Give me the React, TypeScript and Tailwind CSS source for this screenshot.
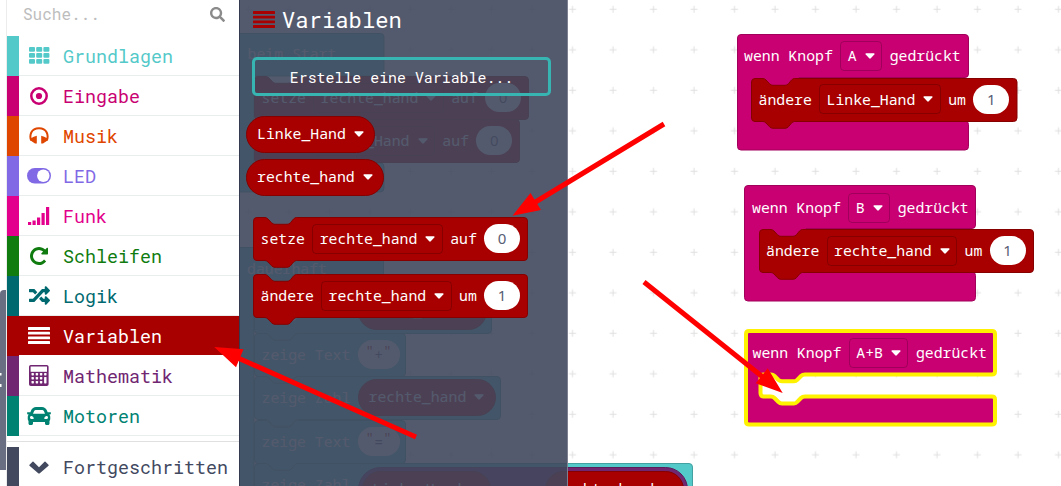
import React from "react";
import { FaCar, FaRandom, FaSearch } from "react-icons/fa";

const mono = "font-['Roboto_Mono','DejaVu_Sans_Mono',monospace]";
const blockFont = "font-['Noto_Sans_Mono','Droid_Sans_Mono','DejaVu_Sans_Mono',monospace] text-[14.8px] leading-none";

/* ---------- toolbox icons ---------- */

const GridIcon = () => (
  <svg width="21" height="17" viewBox="0 0 21 17" fill="currentColor">
    {[0, 6, 12].map((y) => [0, 7.2, 14.4].map((x) => <rect key={`${x}-${y}`} x={x} y={y} width="6" height="4.7" rx="1" />))}
  </svg>
);
const TargetIcon = () => (
  <svg width="18" height="18" viewBox="0 0 18 18" fill="currentColor">
    <circle cx="9" cy="9" r="7.7" fill="none" stroke="currentColor" strokeWidth="2.5" />
    <circle cx="9" cy="9" r="3.1" />
  </svg>
);
const HeadphonesIcon = () => (
  <svg width="20" height="17" viewBox="0 0 20 17" fill="currentColor">
    <path d="M2.2 13.5C.2 8.500 1.800 1.200 10 1.200S19.800 8.500 17.800 13.500" fill="none" stroke="currentColor" strokeWidth="2" />
    <path d="M4.800 9.700 7.800 8.700V16.600H6L1.500 13.500V11.500ZM15.200 9.700 12.200 8.700V16.600H14L18.500 13.500V11.500Z" />
  </svg>
);
const ToggleIcon = () => (
  <svg width="24" height="16" viewBox="0 0 24 16">
    <rect x="0" y="0" width="24" height="15.500" rx="7.750" fill="currentColor" />
    <circle cx="16.300" cy="7.750" r="6.200" fill="white" />
  </svg>
);
const SignalIcon = () => (
  <svg width="22" height="18" viewBox="0 0 22 18" fill="currentColor">
    <rect x="0" y="15" width="3.200" height="3" />
    <rect x="4.500" y="13.500" width="3.200" height="4.500" />
    <rect x="9" y="10.500" width="3.200" height="7.500" />
    <rect x="13.500" y="6" width="3.200" height="12" />
    <rect x="18" y="0" width="3.200" height="18" />
  </svg>
);
const RepeatIcon = () => (
  <svg width="18" height="18" viewBox="0 128 1536 1536" fill="currentColor">
    <path d="M1536 256v448q0 26-19 45t-45 19h-448q-42 0-59-40-17-39 14-69l138-138q-148-137-349-137-104 0-198.500 40.500t-163.500 109.500-109.500 163.500-40.500 198.500 40.500 198.500 109.500 163.500 163.500 109.500 198.500 40.500q119 0 225-52t179-147q7-10 23-12 15 0 25 9l137 138q9 8 9.500 20.500t-7.500 22.500q-109 132-264 204.500t-327 72.500q-156 0-298-61t-245-164-164-245-61-298 61-298 164-245 245-164 298-61q147 0 284.500 55.500t244.500 156.500l130-129q29-31 70-14 39 17 39 59z" />
  </svg>
);
const BarsIcon = ({ className = "" }: { className?: string }) => (
  <svg className={className} width="22" height="17" viewBox="0 0 22 17" fill="currentColor">
    {[0, 4.700, 9.400, 14.100].map((y) => <rect key={y} y={y} width="22" height="2.900" rx=".5" />)}
  </svg>
);
const CalcIcon = () => (
  <svg width="20" height="21" viewBox="0 0 20 21">
    <rect x=".8" y=".8" width="18" height="19.400" rx="1" fill="none" stroke="currentColor" strokeWidth="1.600" />
    <path d="M1 6.800H19V20H1Z" fill="currentColor" />
    <g fill="white">
      {[8, 12, 16].map((y) => [2.500, 6.700, 10.900].map((x) => <rect key={`${x}-${y}`} x={x} y={y} width="2.400" height="2.400" rx=".6" />))}
      <rect x="15.100" y="8" width="2.400" height="2.400" rx=".6" />
      <rect x="15.100" y="12" width="2.400" height="6.400" rx=".6" />
    </g>
  </svg>
);
const ChevronIcon = () => (
  <svg width="20" height="13" viewBox="0 0 20 13" fill="currentColor">
    <path d="M.5 3.700 3.500.7Q4 .2 4.500.7L10 6.200 15.500.7Q16 .2 16.500.7L19.500 3.700Q20 4.200 19.500 4.700L10.500 12.400Q10 12.800 9.500 12.400L.5 4.700Q0 4.200.5 3.700Z" />
  </svg>
);

const categories = [
  { name: "Grundlagen", text: "text-[#54c9c9]", bar: "bg-[#54c9c9]", icon: <GridIcon /> },
  { name: "Eingabe", text: "text-[#c90072]", bar: "bg-[#c90072]", icon: <TargetIcon /> },
  { name: "Musik", text: "text-[#df4600]", bar: "bg-[#df4600]", icon: <HeadphonesIcon /> },
  { name: "LED", text: "text-[#8169e6]", bar: "bg-[#8169e6]", icon: <ToggleIcon /> },
  { name: "Funk", text: "text-[#e3008c]", bar: "bg-[#e3008c]", icon: <SignalIcon /> },
  { name: "Schleifen", text: "text-[#107c10]", bar: "bg-[#107c10]", icon: <RepeatIcon /> },
  { name: "Logik", text: "text-[#006970]", bar: "bg-[#006970]", icon: <FaRandom size={21} /> },
  { name: "Variablen", text: "text-white bg-[#a80000]", bar: "bg-[#a80000]", icon: <BarsIcon />, active: true },
  { name: "Mathematik", text: "text-[#712672]", bar: "bg-[#712672]", icon: <CalcIcon /> },
  { name: "Motoren", text: "text-[#008272]", bar: "bg-[#008272]", icon: <FaCar size={24} /> },
];

const Toolbox = () => (
  <aside className={`relative flex h-[486px] w-[233px] shrink-0 flex-col border-l border-[#ececec] bg-white ${mono} text-[18.350px]`}>
    <div className="flex h-9 shrink-0 items-start justify-between pl-4 pr-[14px] pt-[4px]">
      <span className="text-[16px] leading-[19px] text-[#bdbdbd]">Suche...</span>
      <FaSearch size={15} className="mt-[3px] text-[#8b8b8b]" />
    </div>
    {categories.map((c) => (
      <div key={c.name} className={`flex h-10 shrink-0 ${c.text}`}>
        <div className={`w-3 ${c.bar}`} />
        <div className={`flex grow items-center border-b ${c.active ? "border-white" : "border-[#e9eded]"}`}>
          <span className="flex w-[40px] justify-center">{c.icon}</span>
          <span className="pl-[4px] pt-[2px] leading-none">{c.name}</span>
        </div>
      </div>
    ))}
    <div className="mt-[5px] h-[6px] shrink-0 border-t border-[#e0e0e0]" />
    <div className="flex h-10 shrink-0 text-[#42495f]">
      <div className="w-3 bg-[#42495f]" />
      <div className="flex grow items-center">
        <span className="flex w-[40px] justify-center"><ChevronIcon /></span>
        <span className="pl-[4px] leading-none">Fortgeschritten</span>
      </div>
    </div>
  </aside>
);

/* ---------- block parts ---------- */

const Caret = () => (
  <svg className="shrink-0" width="10" height="6" viewBox="0 0 10 6" fill="currentColor">
    <path d="M1.200.3H8.800Q10 .4 9.300 1.500L5.800 5.300Q5 6 4.200 5.300L.7 1.500Q0 .4 1.200.3Z" />
  </svg>
);
const Field = ({ children }: { children: string }) => (
  <span className="flex h-[30px] items-center gap-[8px] rounded border border-black/20 px-[6.500px]">
    <span>{children}</span>
    <Caret />
  </span>
);
const Value = ({ children }: { children: string }) => (
  <span className="flex h-[29px] w-[36px] items-center justify-center rounded-[14.500px] bg-white font-['Noto_Sans',sans-serif] text-[15px] text-[#575e75]">{children}</span>
);
const Text = ({ children }: { children: string }) => (
  <span className="flex h-[29px] w-[42px] items-center justify-center rounded-[14.500px] bg-white text-[#575e75]">
    <span className="-mt-2 text-[#a31515]">"</span><span>{children}</span><span className="-mt-2 text-[#a31515]">"</span>
  </span>
);

const statementPath = (w: number) => {
  const r = w - 0.5;
  const c = w - 4;
  return `M.5 4Q.5 .5 4 .5H12Q13.5 .5 15 2L18.5 5.7Q20 7.3 22 7.3H34Q36 7.3 37.5 5.7L40.5 2Q42 .5 43.5 .5H${c}Q${r} .5 ${r} 4V40Q${r} 43.5 ${c} 43.5H43.5Q42 43.5 40.5 45L37.5 48.7Q36 50.3 34 50.3H22Q20 50.3 18.5 48.7L15 45Q13.5 43.5 12 43.5H4Q.5 43.5 .5 40Z`;
};

const Statement = ({ place, w, fill, children }: { place: string; w: number; fill: string; children: React.ReactNode }) => (
  <div className={`absolute h-[44px] ${place}`}>
    <svg className="absolute left-0 top-0 overflow-visible" width={w} height="51">
      <path className={fill} d={statementPath(w)} />
    </svg>
    <div className={`relative flex h-[43px] items-center gap-[7.300px] whitespace-nowrap pl-[7.500px] text-white ${blockFont}`}>{children}</div>
  </div>
);
const red = "fill-[#a80000] stroke-[#860000]";
const teal = "fill-[#54c9c9] stroke-[#43a1a1]";

const Pill = ({ children, className = "" }: { children: string; className?: string }) => (
  <span className={`flex h-[37px] items-center gap-[8px] self-start whitespace-nowrap rounded-full border border-[#860000] bg-[#a80000] pb-[2px] pl-[10px] pr-[10.500px] text-white ${blockFont} ${className}`}>
    <span>{children}</span><Caret />
  </span>
);

const Header = ({ place, knob }: { place: string; knob: string }) => (
  <div className={`absolute flex h-[29px] items-center gap-[7.500px] whitespace-nowrap text-white ${blockFont} ${place}`}>
    <span>wenn Knopf</span><Field>{knob}</Field><span>gedrückt</span>
  </div>
);

const EventFrame = ({ place }: { place: string }) => (
  <svg className={`absolute ${place}`} width="232" height="117">
    <path className="fill-[#c90072] stroke-[#a1005b]" d="M.5 4Q.5 .5 4 .5H228Q231.5 .5 231.5 4V40Q231.5 43.5 228 43.5H62V87H228Q231.5 87 231.5 90.5V112.5Q231.5 116 228 116H4Q.5 116 .5 112.5Z" />
  </svg>
);

const Workspace = () => (
  <div className="absolute inset-0 overflow-hidden bg-white">
    <svg className="absolute inset-0" width="1061" height="486">
      <defs>
        <pattern id="dots" x="-14.500" y="-10.700" width="40.500" height="40.500" patternUnits="userSpaceOnUse">
          <path d="M16.500 20H23.500M20 16.500V23.500" stroke="#e0e0e0" strokeWidth="1" />
        </pattern>
      </defs>
      <rect width="1061" height="486" fill="url(#dots)" />
      <path className={teal} d="M230 33.500H380.500Q384 33.500 384 37V76H254V163H381Q384 163 384 167V188Q384 192 380 192H230Z" />
      <path className={teal} d="M230 247.500H380Q383.500 247.500 383.500 251V290H254V490H230Z" />
    </svg>

    <span className={`absolute left-[247.500px] top-[46px] text-white ${blockFont}`}>beim Start</span>
    <Statement place="left-[254px] top-[119px]" w={266} fill={red}>
      <span>setze</span><Field>Linke_Hand</Field><span>auf</span><Value>0</Value>
    </Statement>
    <Statement place="left-[254px] top-[76px]" w={275} fill={red}>
      <span>setze</span><Field>rechte_hand</Field><span>auf</span><Value>0</Value>
    </Statement>

    <span className={`absolute left-[247px] top-[261px] text-white ${blockFont}`}>dauerhaft</span>
    <Statement place="left-[254px] top-[463px]" w={439} fill={teal}>
      <span>zeige Zahl</span>
      <span className="mt-[8px] flex h-[45px] w-[330px] -translate-y-[4px] items-center justify-between self-start rounded-full border border-[#5a1e5b] bg-[#712672] px-[3px]">
        <Pill className="mt-[3px]">Linke_Hand</Pill><span>+</span><Pill className="mt-[3px]">rechte_hand</Pill>
      </span>
    </Statement>
    <Statement place="left-[254px] top-[420px]" w={152} fill={teal}><span>zeige Text</span><Text>=</Text></Statement>
    <Statement place="left-[254px] top-[376px]" w={247} fill={teal}><span>zeige Zahl</span><Pill className="mt-[3px]">rechte_hand</Pill></Statement>
    <Statement place="left-[254px] top-[333px]" w={152} fill={teal}><span>zeige Text</span><Text>+</Text></Statement>
    <Statement place="left-[254px] top-[290px]" w={238} fill={teal}><span>zeige Zahl</span><Pill className="mt-[3px]">Linke_Hand</Pill></Statement>

    <EventFrame place="left-[737px] top-[34px]" />
    <Header place="left-[744px] top-[41px]" knob="A" />
    <Statement place="left-[751px] top-[77.500px]" w={266.500} fill={red}>
      <span>ändere</span><Field>Linke_Hand</Field><span>um</span><Value>1</Value>
    </Statement>

    <EventFrame place="left-[744px] top-[185px]" />
    <Header place="left-[752px] top-[193px]" knob="B" />
    <Statement place="left-[758.500px] top-[229px]" w={275} fill={red}>
      <span>ändere</span><Field>rechte_hand</Field><span>um</span><Value>1</Value>
    </Statement>

    <svg className="absolute left-[740px] top-[325px]" width="262" height="106">
      <path
        transform="translate(-740 -325)"
        fill="#c90072"
        stroke="#fff200"
        strokeWidth="4"
        d="M746 334Q746 331 749 331H992Q995 331 995 334V371.500Q995 374.500 992 374.500H805Q802.500 374.500 801 376L797 380Q796 381.300 794 381.300H782Q780 381.300 778.500 380L774.500 376Q773 374.500 771 374.500H764Q760.500 374.500 760.500 378V393Q760.500 396.500 764 396.500H771Q773 396.500 774.500 398L778.500 402Q780 403.500 782 403.500H794Q796 403.500 797 402L801 398Q802.500 396.500 805 396.500H992Q995 396.500 995 399.500V421.500Q995 424.500 992 424.500H749Q746 424.500 746 421.500Z"
      />
    </svg>
    <Header place="left-[752.500px] top-[338px]" knob="A+B" />
  </div>
);

const Flyout = () => (
  <section className="relative flex h-[486px] w-[329px] shrink-0 flex-col border-l border-r border-l-[#343b50] border-r-[#7c8091] bg-[#41485d]/90">
    <div className={`ml-[13px] mt-[7px] flex h-[26px] items-center gap-[7px] ${mono} text-[22.200px] leading-none text-white`}>
      <BarsIcon className="-mt-[2px] text-[#a80000]" />
      <span>Variablen</span>
    </div>
    <button className={`ml-[12px] mt-[24px] flex h-[39px] w-[299px] items-center justify-center rounded-[5px] border-[3px] border-[#36b5b3] pt-[2px] ${mono} text-[14.900px] text-white`}>
      Erstelle eine Variable...
    </button>
    <div className="ml-[6px] mt-[20px] flex flex-col gap-[6px]">
      <Pill>Linke_Hand</Pill>
      <Pill>rechte_hand</Pill>
    </div>
    <Statement place="left-[13px] top-[217px]" w={275} fill={red}>
      <span>setze</span><Field>rechte_hand</Field><span>auf</span><Value>0</Value>
    </Statement>
    <Statement place="left-[13px] top-[274px]" w={275} fill={red}>
      <span>ändere</span><Field>rechte_hand</Field><span>um</span><Value>1</Value>
    </Statement>
  </section>
);

export default function App() {
  return (
    <main className="relative flex h-[486px] w-[1061px] overflow-hidden">
      <Workspace />
      <div className="relative h-[486px] w-[6px] shrink-0 bg-white">
        <div className="absolute left-0 top-[290px] h-[180px] w-[7px] rounded-tl-[4px] bg-[#6a6e82]" />
        <svg className="absolute left-0 top-[372px]" width="3" height="16">
          <path d="M0 1V3.500M0 12V15" stroke="white" strokeWidth="3" />
        </svg>
      </div>
      <Toolbox />
      <Flyout />
      <svg className="absolute inset-0" width="1061" height="486" fill="#ff0000" stroke="none">
        <path d="M664 124 533 203.500M644 282 764 378M416 437 238 358" stroke="#ff0000" strokeWidth="5" />
        <path d="M512.500 215.700 530.500 193 541 210ZM782.700 393 767.700 368.300 755.700 383.300ZM214.300 347 243.500 349.300 236 367.300Z" />
      </svg>
    </main>
  );
}
